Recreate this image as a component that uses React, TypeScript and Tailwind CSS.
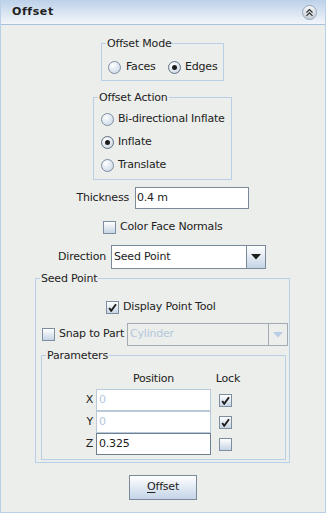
import React from 'react';

const panelBg = 'bg-[#eceeeb]';

function Radio({ checked }: { checked?: boolean }) {
    return (
        <span
            className={`w-[13px] h-[13px] shrink-0 rounded-full border ${checked ? 'border-[#5f6f82]' : 'border-[#7d8ea1]'} bg-[radial-gradient(circle_at_35%_30%,#ffffff,#c3d1e2)] flex items-center justify-center`}
        >
            {checked && <span className="w-[5px] h-[5px] rounded-full bg-[#1c1c1c]" />}
        </span>
    );
}

function Checkbox({ checked }: { checked?: boolean }) {
    return (
        <span className="w-[13px] h-[13px] shrink-0 border border-[#7d8ea1] bg-linear-to-b from-white to-[#c6d4e4] flex items-center justify-center">
            {checked && (
                <svg width="9" height="9" viewBox="0 0 9 9">
                    <path d="M1.2 5 L3.2 7.8 L8 1.3" fill="none" stroke="#1c1c1c" strokeWidth="1.9" strokeLinejoin="miter" />
                </svg>
            )}
        </span>
    );
}

function Arrow({ color }: { color: string }) {
    return (
        <svg width="10" height="6" viewBox="0 0 10 6">
            <path d="M0 0 H10 L5 5.5 Z" fill={color} />
        </svg>
    );
}

function Group({ title, className, children }: { title: string; className: string; children?: React.ReactNode }) {
    return (
        <div className={`relative shrink-0 border border-[#b8cfe5] ${className}`}>
            <span className={`absolute -top-[7px] left-[4px] px-[1px] leading-[13px] ${panelBg}`}>{title}</span>
            {children}
        </div>
    );
}

export default function App() {
    return (
        <div className={`w-[326px] h-[513px] flex flex-col ${panelBg} border-x border-b border-[#b8cfe5] font-['DejaVu_Sans',sans-serif] text-[11px] tracking-[-0.2px] text-[#222]`}>
            {/* Header */}
            <div className="h-[25px] shrink-0 flex items-center justify-between pl-[11px] pr-[8px] border-b border-[#a9c3de] bg-linear-to-b from-[#bcd1e9] to-[#f3f6fa]">
                <span className="font-bold tracking-[0.6px] text-[#1e1e1e]">Offset</span>
                <span className="w-[15px] h-[15px] rounded-full border border-[#97a6b7] bg-linear-to-b from-[#f6f7f9] to-[#c4ccd6] flex items-center justify-center">
                    <svg width="9" height="9" viewBox="0 0 9 9">
                        <path d="M1.5 4.5 L4.5 1.5 L7.5 4.5 M1.5 7.8 L4.5 4.8 L7.5 7.8" fill="none" stroke="#2a2a2a" strokeWidth="1.1" />
                    </svg>
                </span>
            </div>

            {/* Offset Mode */}
            <Group title="Offset Mode" className="ml-[100px] mt-[18px] w-[123px] h-[38px]">
                <div className="flex items-center pt-[15px] pl-[6px]">
                    <div className="w-[60px] flex items-center gap-[5px]">
                        <Radio />
                        <span>Faces</span>
                    </div>
                    <div className="flex items-center gap-[4px]">
                        <Radio checked />
                        <span>Edges</span>
                    </div>
                </div>
            </Group>

            {/* Offset Action */}
            <Group title="Offset Action" className="ml-[92px] mt-[16px] w-[139px] h-[83px]">
                <div className="flex flex-col pt-[10px] pl-[7px]">
                    {[
                        ['Bi-directional Inflate', false],
                        ['Inflate', true],
                        ['Translate', false],
                    ].map(([label, on]) => (
                        <div key={label as string} className="h-[23px] flex items-center gap-[4px]">
                            <Radio checked={on as boolean} />
                            <span>{label as string}</span>
                        </div>
                    ))}
                </div>
            </Group>

            {/* Thickness */}
            <div className="mt-[7px] h-[22px] flex items-center shrink-0">
                <span className="w-[128px] text-right">Thickness</span>
                <div className="ml-[6px] w-[114px] h-[22px] border border-[#7a8a99] bg-white flex items-center pl-[1px]">0.4 m</div>
            </div>

            {/* Color Face Normals */}
            <div className="mt-[12px] ml-[102px] h-[13px] flex items-center gap-[4px] shrink-0">
                <Checkbox />
                <span>Color Face Normals</span>
            </div>

            {/* Direction */}
            <div className="mt-[11px] h-[24px] flex items-center shrink-0">
                <span className="w-[105px] text-right">Direction</span>
                <div className="ml-[5px] w-[155px] h-[24px] flex border border-[#7a8a99] bg-white">
                    <div className="flex-1 flex items-center pl-[2px]">Seed Point</div>
                    <div className="w-[19px] border-l border-[#7a8a99] bg-linear-to-b from-white to-[#c4d4e6] flex items-center justify-center">
                        <Arrow color="#1c1c1c" />
                    </div>
                </div>
            </div>

            {/* Seed Point */}
            <Group title="Seed Point" className="ml-[34px] mt-[9px] w-[255px] h-[185px]">
                <div className="flex flex-col">
                    <div className="mt-[22px] ml-[70px] h-[13px] flex items-center gap-[4px]">
                        <Checkbox checked />
                        <span>Display Point Tool</span>
                    </div>

                    <div className="mt-[9px] h-[23px] flex items-center">
                        <div className="w-[91px] pl-[6px] flex items-center gap-[4px]">
                            <Checkbox />
                            <span>Snap to Part</span>
                        </div>
                        <div className="w-[161px] h-[23px] flex border border-[#a3abb4]">
                            <div className="flex-1 flex items-center pl-[2px] text-[#b3c7dd]">Cylinder</div>
                            <div className="w-[19px] border-l border-[#a3abb4] flex items-center justify-center">
                                <Arrow color="#b8cde3" />
                            </div>
                        </div>
                    </div>

                    {/* Parameters */}
                    <Group title="Parameters" className="ml-[5px] mt-[9px] w-[245px] h-[105px]">
                        <div className="flex flex-col">
                            <div className="mt-[17px] h-[13px] flex items-center">
                                <span className="w-[54px]" />
                                <span className="w-[115px] text-center">Position</span>
                                <span className="ml-[2px] w-[30px] text-center">Lock</span>
                            </div>
                            <div className="mt-[3px] flex flex-col">
                                {[
                                    ['X', '0', true],
                                    ['Y', '0', true],
                                    ['Z', '0.325', false],
                                ].map(([axis, val, locked]) => (
                                    <div key={axis as string} className="h-[22px] flex items-center">
                                        <span className="w-[51px] text-right">{axis as string}</span>
                                        <div
                                            className={`ml-[3px] w-[115px] h-[22px] bg-white flex items-center pl-[2px] border ${locked ? 'border-[#b9c9da] text-[#b3c7dd]' : 'border-[#6f7f92] text-[#222]'}`}
                                        >
                                            {val as string}
                                        </div>
                                        <span className="ml-[8px]">
                                            <Checkbox checked={locked as boolean} />
                                        </span>
                                    </div>
                                ))}
                            </div>
                        </div>
                    </Group>
                </div>
            </Group>

            {/* Offset button */}
            <button className="ml-[128px] mt-[12px] w-[68px] h-[25px] shrink-0 border border-[#7a8a99] bg-linear-to-b from-white to-[#c4d4e7] flex items-center justify-center text-[#222]">
                <span>
                    <span className="underline underline-offset-2">O</span>ffset
                </span>
            </button>
        </div>
    );
}
